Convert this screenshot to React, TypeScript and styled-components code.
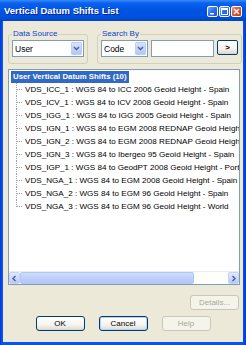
import React from "react";
import styled, { createGlobalStyle } from "styled-components";

const Global = createGlobalStyle`
  html, body { margin: 0; padding: 0; background: #ffffff; }
  body { font-family: "Liberation Sans", Arial, sans-serif; }
  #root { width: 246px; height: 345px; }
`;

const Window = styled.div`
  width: 246px;
  height: 345px;
  box-sizing: border-box;
  display: flex;
  flex-direction: column;
  background: linear-gradient(to right, #0831D9 0px, #0755EB 2px, #0755EB 243px, #0831D9 246px);
  padding: 0 3px 3px 3px;
`;

const TitleBar = styled.div`
  height: 21px;
  margin: 0 -3px;
  padding: 0 4px 0 4px;
  display: flex;
  align-items: center;
  background: linear-gradient(to bottom, #3B8CF8 0px, #0A62F0 3px, #0055E5 9px, #0052DF 16px, #0045C8 21px);
`;

const Title = styled.div`
  flex: 1;
  color: #ffffff;
  font-weight: bold;
  font-size: 9.5px;
  text-shadow: 1px 1px 0 #0A1E8C;
  white-space: nowrap;
`;

const CaptionButtons = styled.div`
  display: flex;
  gap: 1px;
  margin-top: 1px;
`;

const CapBtn = styled.div<{ $close?: boolean }>`
  width: 11px;
  height: 11px;
  box-sizing: border-box;
  border: 1px solid #ffffff;
  border-radius: 2px;
  display: flex;
  align-items: center;
  justify-content: center;
  background: ${(p) =>
    p.$close
      ? "linear-gradient(135deg, #F09D82 0%, #E0512B 45%, #C93A13 100%)"
      : "linear-gradient(135deg, #7FA8F8 0%, #2A6DF0 50%, #1D54D8 100%)"};
`;

const Body = styled.div`
  flex: 1;
  background: #ECE9D8;
  display: flex;
  flex-direction: column;
  padding: 8px 3px 0 5px;
  font-size: 8px;
  color: #000;
`;

const GroupRow = styled.div`
  display: flex;
  gap: 9px;
`;

const Group = styled.fieldset<{ $w: number }>`
  margin: 0;
  width: ${(p) => p.$w}px;
  box-sizing: border-box;
  border: 1px solid #D0D0BF;
  border-radius: 3px;
  padding: 1px 3px 6px 3px;
  display: flex;
  gap: 3px;
  align-items: flex-start;
`;

const Legend = styled.legend`
  color: #0046D5;
  font-size: 8px;
  line-height: 10px;
  padding: 0 1px;
  margin-left: 0px;
`;

const Combo = styled.div<{ $w: number }>`
  width: ${(p) => p.$w}px;
  height: 17px;
  box-sizing: border-box;
  background: #ffffff;
  border: 1px solid #7F9DB9;
  display: flex;
  align-items: stretch;
`;

const ComboText = styled.div`
  flex: 1;
  padding-left: 2px;
  display: flex;
  align-items: center;
  font-size: 8.5px;
`;

const ComboArrow = styled.div`
  width: 11px;
  margin: 1px;
  border-radius: 1px;
  background: linear-gradient(to bottom, #D8E4FD 0%, #C1D3FB 50%, #B4C8F6 100%);
  border: 1px solid #BCCEF7;
  box-sizing: border-box;
  display: flex;
  align-items: center;
  justify-content: center;
`;

const TextField = styled.div<{ $w: number }>`
  width: ${(p) => p.$w}px;
  height: 17px;
  box-sizing: border-box;
  background: #ffffff;
  border: 1px solid #7F9DB9;
`;

const SmallButton = styled.div`
  width: 21px;
  height: 15px;
  box-sizing: border-box;
  border: 1px solid #003C74;
  border-radius: 2px;
  background: linear-gradient(to bottom, #FFFFFF 0%, #F4F3EE 60%, #D8D5C8 100%);
  display: flex;
  align-items: center;
  justify-content: center;
  font-weight: bold;
  font-size: 8px;
`;

const TreeBox = styled.div`
  margin-top: 5px;
  width: 232px;
  height: 216px;
  box-sizing: border-box;
  border: 1px solid #7F9DB9;
  background: #ffffff;
  display: flex;
  flex-direction: column;
`;

const TreeContent = styled.div`
  flex: 1;
  overflow: hidden;
  padding-top: 1px;
  padding-left: 2px;
`;

const HeaderRow = styled.div`
  height: 12px;
  display: flex;
  align-items: center;
`;

const HeaderLabel = styled.div`
  background: #316AC5;
  color: #ffffff;
  font-weight: bold;
  font-size: 7.8px;
  height: 12px;
  line-height: 12px;
  padding: 0 2px;
  white-space: nowrap;
`;

const ItemRow = styled.div`
  height: 13px;
  display: flex;
  align-items: center;
  white-space: nowrap;
`;

const ItemText = styled.div`
  font-size: 8.1px;
  padding-left: 2px;
  color: #000;
`;

const HScroll = styled.div`
  height: 12px;
  display: flex;
  background: #FEFEFB;
  border-top: 1px solid #EEEDE5;
`;

const ScrollArrow = styled.div`
  width: 11px;
  box-sizing: border-box;
  border: 1px solid #C3D3FD;
  border-radius: 2px;
  background: linear-gradient(to bottom, #E1EAFE 0%, #C6D6FC 60%, #B6C9F6 100%);
  display: flex;
  align-items: center;
  justify-content: center;
`;

const ScrollThumb = styled.div<{ $w: number }>`
  width: ${(p) => p.$w}px;
  box-sizing: border-box;
  border: 1px solid #B4C7F4;
  border-radius: 2px;
  background: linear-gradient(to bottom, #CFDDFC 0%, #BED0FA 50%, #B2C6F5 100%);
`;

const ScrollTrack = styled.div`
  flex: 1;
`;

const DetailsRow = styled.div`
  display: flex;
  justify-content: flex-end;
  margin-top: 10px;
  padding-right: 1px;
`;

const ButtonRow = styled.div`
  display: flex;
  justify-content: center;
  gap: 14px;
  margin-top: 6px;
  padding-right: 2px;
`;

const PushButton = styled.div<{ $disabled?: boolean; $focus?: boolean }>`
  width: 49px;
  height: 15px;
  box-sizing: border-box;
  border: 1px solid ${(p) => (p.$disabled ? "#C9C7BA" : "#003C74")};
  border-radius: 3px;
  background: ${(p) =>
    p.$disabled
      ? "#F5F4EA"
      : "linear-gradient(to bottom, #FFFFFF 0%, #F5F4EF 60%, #E3E1D8 90%, #D6D0C5 100%)"};
  color: ${(p) => (p.$disabled ? "#ACA899" : "#000")};
  font-size: 8px;
  display: flex;
  align-items: center;
  justify-content: center;
  box-shadow: ${(p) => (p.$focus ? "inset 0 0 0 1px #B8D3F8" : "none")};
`;

const Chevron = ({ dir, color = "#4D6185" }: { dir: "down" | "left" | "right"; color?: string }) => {
  const d =
    dir === "down" ? "M1 2 L3.5 4.5 L6 2" : dir === "left" ? "M4.5 1 L2 3.5 L4.5 6" : "M2.5 1 L5 3.5 L2.5 6";
  return (
    <svg width="7" height="7" viewBox="0 0 7 7">
      <path d={d} fill="none" stroke={color} strokeWidth="1.4" />
    </svg>
  );
};

const Branch = ({ last }: { last?: boolean }) => (
  <svg width="12" height="13" viewBox="0 0 12 13" style={{ flex: "none" }}>
    <line x1="5.5" y1="0" x2="5.5" y2={last ? 7 : 13} stroke="#A0A0A0" strokeDasharray="1 1" />
    <line x1="6" y1="6.5" x2="12" y2="6.5" stroke="#A0A0A0" strokeDasharray="1 1" />
  </svg>
);

const items = [
  "VDS_ICC_1 : WGS 84 to ICC 2006 Geoid Height - Spain",
  "VDS_ICV_1 : WGS 84 to ICV 2008 Geoid Height - Spain",
  "VDS_IGG_1 : WGS 84 to IGG 2005 Geoid Height - Spain",
  "VDS_IGN_1 : WGS 84 to EGM 2008 REDNAP Geoid Height - Spain",
  "VDS_IGN_2 : WGS 84 to EGM 2008 REDNAP Geoid Height - Spain",
  "VDS_IGN_3 : WGS 84 to Ibergeo 95 Geoid Height - Spain",
  "VDS_IGP_1 : WGS 84 to GeodPT 2008 Geoid Height - Portugal",
  "VDS_NGA_1 : WGS 84 to EGM 2008 Geoid Height - Spain",
  "VDS_NGA_2 : WGS 84 to EGM 96 Geoid Height - Spain",
  "VDS_NGA_3 : WGS 84 to EGM 96 Geoid Height - World",
];

export default function App() {
  return (
    <>
      <Global />
      <Window>
        <TitleBar>
          <Title>Vertical Datum Shifts List</Title>
          <CaptionButtons>
            <CapBtn>
              <svg width="7" height="7" viewBox="0 0 7 7">
                <rect x="1" y="5" width="4" height="1.5" fill="#fff" />
              </svg>
            </CapBtn>
            <CapBtn>
              <svg width="7" height="7" viewBox="0 0 7 7">
                <rect x="0.5" y="0.5" width="6" height="6" fill="none" stroke="#fff" />
                <rect x="0.5" y="0.5" width="6" height="1.5" fill="#fff" />
              </svg>
            </CapBtn>
            <CapBtn $close>
              <svg width="7" height="7" viewBox="0 0 7 7">
                <path d="M1 1 L6 6 M6 1 L1 6" stroke="#fff" strokeWidth="1.4" />
              </svg>
            </CapBtn>
          </CaptionButtons>
        </TitleBar>
        <Body>
          <GroupRow>
            <Group $w={80}>
              <Legend>Data Source</Legend>
              <Combo $w={72}>
                <ComboText>User</ComboText>
                <ComboArrow>
                  <Chevron dir="down" />
                </ComboArrow>
              </Combo>
            </Group>
            <Group $w={143}>
              <Legend>Search By</Legend>
              <Combo $w={47}>
                <ComboText>Code</ComboText>
                <ComboArrow>
                  <Chevron dir="down" />
                </ComboArrow>
              </Combo>
              <TextField $w={63} />
              <SmallButton>&gt;</SmallButton>
            </Group>
          </GroupRow>
          <TreeBox>
            <TreeContent>
              <HeaderRow>
                <HeaderLabel>User Vertical Datum Shifts (10)</HeaderLabel>
              </HeaderRow>
              {items.map((t, i) => (
                <ItemRow key={t}>
                  <Branch last={i === items.length - 1} />
                  <ItemText>{t}</ItemText>
                </ItemRow>
              ))}
            </TreeContent>
            <HScroll>
              <ScrollArrow>
                <Chevron dir="left" />
              </ScrollArrow>
              <ScrollThumb $w={174} />
              <ScrollTrack />
              <ScrollArrow>
                <Chevron dir="right" />
              </ScrollArrow>
            </HScroll>
          </TreeBox>
          <DetailsRow>
            <PushButton $disabled>Details...</PushButton>
          </DetailsRow>
          <ButtonRow>
            <PushButton>OK</PushButton>
            <PushButton $focus>Cancel</PushButton>
            <PushButton $disabled>Help</PushButton>
          </ButtonRow>
        </Body>
      </Window>
    </>
  );
}
